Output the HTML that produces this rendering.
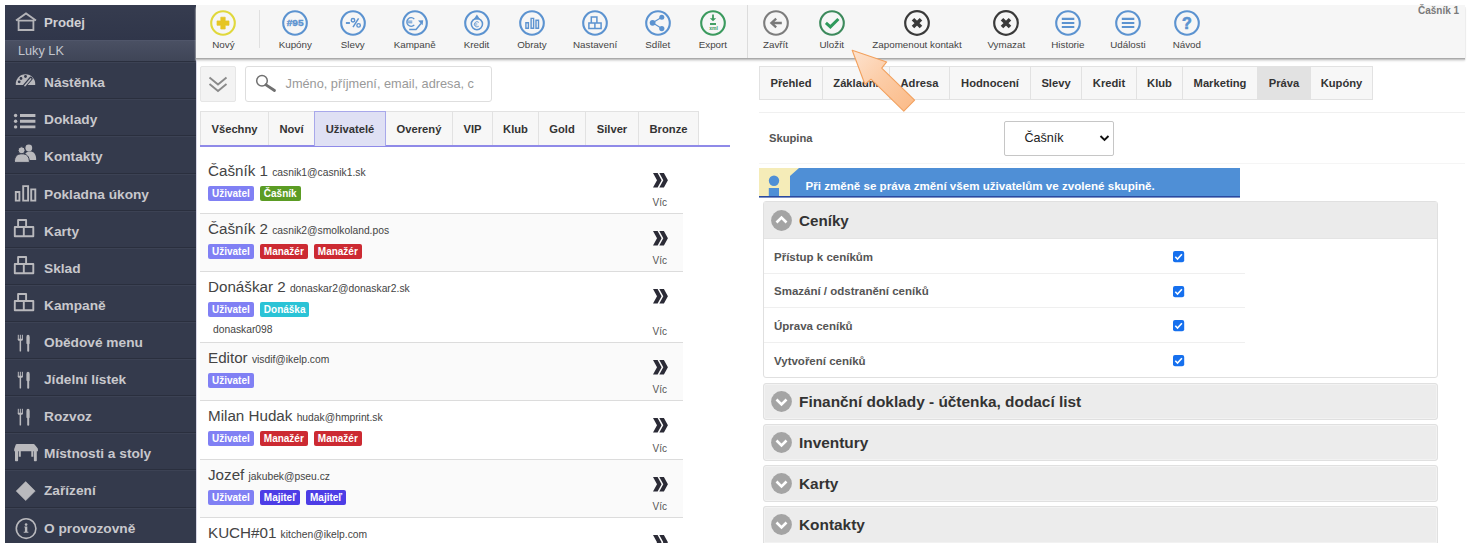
<!DOCTYPE html>
<html><head><meta charset="utf-8">
<style>
*{box-sizing:border-box;margin:0;padding:0}
html,body{width:1471px;height:553px;overflow:hidden;background:#fff;font-family:"Liberation Sans",sans-serif;position:relative}
.a{position:absolute}
.nw{white-space:nowrap}
/* sidebar */
#sb{left:5px;top:5px;width:191px;height:538px;background:#343a4c;overflow:hidden}
.sbh{left:0;top:0;width:191px;height:35px;background:linear-gradient(#363c4f,#30364a)}
.sbl{left:0;top:35px;width:191px;height:21px;background:linear-gradient(#4a5063,#3f4557);border-top:1px solid #50566a;color:#c3c6ce;font-size:12.7px}
.sr{left:0;width:191px;height:37px;border-top:1px solid #2a2f3e;box-shadow:inset 0 1px 0 #3c4254}
.st{left:39px;color:#c8c8cc;font-size:13.7px;font-weight:bold;white-space:nowrap}
.si{left:8px}
/* toolbar */
.tb{top:5px;height:53px;background:#f6f6f6;box-shadow:0 1px 0 #aaa,0 2px 1px #c8c8c8,0 3px 2px #e0e0e0}
.tl{font-size:9.8px;color:#444;white-space:nowrap;text-align:center;width:120px;top:35px}
.ic{top:9px;width:28px;height:28px}
/* list */
.tab{top:111px;height:35px;background:#f7f7f7;border:1px solid #e2e2e2;border-bottom:none;font-size:11.2px;font-weight:bold;color:#333;text-align:center;line-height:34px}
.li{left:200px;width:483px;border-bottom:1px solid #dcdcdc}
.nm{left:8px;font-size:15.2px;color:#444;white-space:nowrap}
.nm small{font-size:10.3px;color:#444}
.bd{height:15px;top:31px;color:#fff;font-size:10px;font-weight:bold;line-height:15px;padding:0 4px;border-radius:2px;white-space:nowrap}
.bu{background:#8080f4}
.bg{background:#5b9c24}
.br{background:#cc2a32}
.bc{background:#2bc3d6}
.bm{background:#4d3de6}
.more{left:455px;width:20px}
.vic{left:452.5px;font-size:10px;color:#555;white-space:nowrap}
/* right */
.rt{top:66px;height:34px;background:#f7f7f7;border:1px solid #e2e2e2;font-size:11.2px;font-weight:bold;color:#333;text-align:center;line-height:32px}
.acc{left:763px;width:675px;height:37px;background:#ececec;border:1px solid #e0e0e0;border-radius:3px;box-shadow:inset 0 0 0 1px #f2f2f2}
.acct{left:35px;top:8px;font-size:15.2px;font-weight:bold;color:#333;white-space:nowrap}
.row{left:764px;width:481px;height:35px;border-bottom:1px solid #ececec}
.rowt{left:10px;top:10px;font-size:11.2px;font-weight:bold;color:#555;white-space:nowrap}
.cb{left:409px;top:11px;width:12px;height:12px;background:#1f72e8;border-radius:2px}
</style></head><body>

<!-- SIDEBAR -->
<div id="sb" class="a">
  <div class="a sbh">
    <svg class="a" style="left:9px;top:6px" width="24" height="22" viewBox="0 0 24 22"><path d="M2 9.6 L12 2.4 L22 9.6 M3.5 9.6 H20.5 M4.6 9.6 V19 H19.4 V9.6" fill="none" stroke="#b4b4b8" stroke-width="1.8"/></svg>
    <div class="a nw" style="left:39px;top:10px;color:#d0d0d4;font-size:13.2px;font-weight:bold">Prodej</div>
  </div>
  <div class="a sbl"><div class="a nw" style="left:13px;top:3px">Luky LK</div></div>
  <div class="a sr" style="top:56px;height:37px"><svg class="a" style="left:0;top:-1px" width="40" height="38" viewBox="0 0 40 38"><g transform="translate(0,-0.9)"><path d="M10.81 24.9A9.75 9.75 0 1 1 30.19 24.9Z" fill="#b9b9bd"/><circle cx="14.2" cy="21.7" r="1.4" fill="#343a4c"/><circle cx="16" cy="18.4" r="1.4" fill="#343a4c"/><circle cx="20.5" cy="16.4" r="1.4" fill="#343a4c"/><path d="M19.7 25.6L25.9 18.4" stroke="#343a4c" stroke-width="3.6" stroke-linecap="round"/><path d="M19.9 25.6L25.7 18.8" stroke="#b9b9bd" stroke-width="1.5" stroke-linecap="round"/></g></svg><div class="a st" style="top:12.6px">Nástěnka</div></div>
  <div class="a sr" style="top:93px;height:37px"><svg class="a" style="left:0;top:-1px" width="40" height="38" viewBox="0 0 40 38"><circle cx="10.6" cy="17.5" r="1.7" fill="#b9b9bd"/><circle cx="10.6" cy="23.2" r="1.7" fill="#b9b9bd"/><circle cx="10.6" cy="28.9" r="1.7" fill="#b9b9bd"/><path d="M15 17.5h15.4M15 23.2h15.4M15 28.9h15.4" stroke="#b9b9bd" stroke-width="2.9"/></svg><div class="a st" style="top:12.6px">Doklady</div></div>
  <div class="a sr" style="top:130px;height:38px"><svg class="a" style="left:0;top:-1px" width="40" height="38" viewBox="0 0 40 38"><g transform="translate(0,-0.8)"><circle cx="23.8" cy="13.8" r="3.4" fill="#b9b9bd"/><path d="M18.8 25.7C18.8 20 21.3 17.4 25 17.4C28.8 17.4 31.2 20 31.2 25.7Z" fill="#b9b9bd"/><circle cx="16.6" cy="16.1" r="3.5" fill="#b9b9bd" stroke="#343a4c" stroke-width="1"/><path d="M9.4 28.2C9.4 22.2 12 19.6 16.9 19.6C21.8 19.6 24.4 22.2 24.4 28.2Z" fill="#b9b9bd" stroke="#343a4c" stroke-width="1"/></g></svg><div class="a st" style="top:12.6px">Kontakty</div></div>
  <div class="a sr" style="top:168px;height:37px"><svg class="a" style="left:0;top:-1px" width="40" height="38" viewBox="0 0 40 38"><path d="M10.8 19h3.6v8.6h-3.6z M18.2 13.1h4.9v14.5h-4.9z M26.2 16.4h4.1v11.2h-4.1z" fill="none" stroke="#b9b9bd" stroke-width="1.9"/></svg><div class="a st" style="top:12.6px">Pokladna úkony</div></div>
  <div class="a sr" style="top:205px;height:37px"><svg class="a" style="left:0;top:-1px" width="40" height="38" viewBox="0 0 40 38"><path d="M13.1 10h8v7h-8z M9.8 17h9v9.3h-9z M18.8 17h9.5v9.3h-9.5z" fill="none" stroke="#b9b9bd" stroke-width="1.9" stroke-linejoin="round"/></svg><div class="a st" style="top:12.6px">Karty</div></div>
  <div class="a sr" style="top:242px;height:37px"><svg class="a" style="left:0;top:-1px" width="40" height="38" viewBox="0 0 40 38"><path d="M13.1 10h8v7h-8z M9.8 17h9v9.3h-9z M18.8 17h9.5v9.3h-9.5z" fill="none" stroke="#b9b9bd" stroke-width="1.9" stroke-linejoin="round"/></svg><div class="a st" style="top:12.6px">Sklad</div></div>
  <div class="a sr" style="top:279px;height:37px"><svg class="a" style="left:0;top:-1px" width="40" height="38" viewBox="0 0 40 38"><path d="M13.1 10h8v7h-8z M9.8 17h9v9.3h-9z M18.8 17h9.5v9.3h-9.5z" fill="none" stroke="#b9b9bd" stroke-width="1.9" stroke-linejoin="round"/></svg><div class="a st" style="top:12.6px">Kampaně</div></div>
  <div class="a sr" style="top:316px;height:37px"><svg class="a" style="left:0;top:-1px" width="40" height="38" viewBox="0 0 40 38"><path d="M13.3 13.8v5 M15.35 13.8v5 M17.4 13.8v5" stroke="#b9b9bd" stroke-width="1"/><path d="M12.8 17.8h5.1v0.6c0 .8-.6 1.4-1.4 1.4h-2.3c-.8 0-1.4-.6-1.4-1.4z M14.6 19h1.5v11c0 .4-.3.6-.75.6s-.75-.2-.75-.6z" fill="#b9b9bd"/><path d="M21.4 16Q21.4 13.8 23 13.8Q24.7 13.8 24.7 16V22.5L24.2 23.3V30Q24.2 30.8 23.2 30.8Q22.2 30.8 22.2 30V23.3L21.4 22.5Z" fill="#b9b9bd"/></svg><div class="a st" style="top:12.6px">Obědové menu</div></div>
  <div class="a sr" style="top:353px;height:37px"><svg class="a" style="left:0;top:-1px" width="40" height="38" viewBox="0 0 40 38"><path d="M13.3 13.8v5 M15.35 13.8v5 M17.4 13.8v5" stroke="#b9b9bd" stroke-width="1"/><path d="M12.8 17.8h5.1v0.6c0 .8-.6 1.4-1.4 1.4h-2.3c-.8 0-1.4-.6-1.4-1.4z M14.6 19h1.5v11c0 .4-.3.6-.75.6s-.75-.2-.75-.6z" fill="#b9b9bd"/><path d="M21.4 16Q21.4 13.8 23 13.8Q24.7 13.8 24.7 16V22.5L24.2 23.3V30Q24.2 30.8 23.2 30.8Q22.2 30.8 22.2 30V23.3L21.4 22.5Z" fill="#b9b9bd"/></svg><div class="a st" style="top:12.6px">Jídelní lístek</div></div>
  <div class="a sr" style="top:390px;height:37px"><svg class="a" style="left:0;top:-1px" width="40" height="38" viewBox="0 0 40 38"><path d="M13.3 13.8v5 M15.35 13.8v5 M17.4 13.8v5" stroke="#b9b9bd" stroke-width="1"/><path d="M12.8 17.8h5.1v0.6c0 .8-.6 1.4-1.4 1.4h-2.3c-.8 0-1.4-.6-1.4-1.4z M14.6 19h1.5v11c0 .4-.3.6-.75.6s-.75-.2-.75-.6z" fill="#b9b9bd"/><path d="M21.4 16Q21.4 13.8 23 13.8Q24.7 13.8 24.7 16V22.5L24.2 23.3V30Q24.2 30.8 23.2 30.8Q22.2 30.8 22.2 30V23.3L21.4 22.5Z" fill="#b9b9bd"/></svg><div class="a st" style="top:12.6px">Rozvoz</div></div>
  <div class="a sr" style="top:427px;height:37px"><svg class="a" style="left:0;top:-1px" width="40" height="38" viewBox="0 0 40 38"><path d="M11.8 12.1H28.6Q29.2 12.1 29.6 12.6L32.6 16.3Q32.9 16.7 32.9 17.2V19.3H9.2V17.2Q9.2 16.7 9.5 16.3L10.8 12.6Q11.2 12.1 11.8 12.1Z" fill="#b9b9bd"/><path d="M10 19h3.1v9.6q0 .7-.7.7h-1.7q-.7 0-.7-.7z M28.9 19h2.9v9.6q0 .7-.7.7h-1.5q-.7 0-.7-.7z M13.8 19h2v5.8h-2z M26.3 19h2v5.8h-2z" fill="#b9b9bd"/></svg><div class="a st" style="top:12.6px">Místnosti a stoly</div></div>
  <div class="a sr" style="top:464px;height:38px"><svg class="a" style="left:0;top:-1px" width="40" height="38" viewBox="0 0 40 38"><path d="M20.7 12.6 L30.2 22.1 L20.7 31.6 L11.2 22.1z" fill="#b9b9bd" stroke="#b9b9bd" stroke-width="0.6" stroke-linejoin="round"/></svg><div class="a st" style="top:12.6px">Zařízení</div></div>
  <div class="a sr" style="top:502px;height:36px"><svg class="a" style="left:0;top:-1px" width="40" height="38" viewBox="0 0 40 38"><circle cx="21.1" cy="21.6" r="9.8" fill="none" stroke="#b9b9bd" stroke-width="1.6"/><circle cx="21.1" cy="17.6" r="1.3" fill="#b9b9bd"/><path d="M19.4 19.4h2.9v5.3h1.1v1.1h-4.7v-1.1h1.2v-4.2h-.5z" fill="#b9b9bd"/></svg><div class="a st" style="top:12.6px">O provozovně</div></div>
</div>

<!-- TOOLBAR -->
<div class="a tb" style="left:196px;width:1269px"></div>
<div class="a" style="left:747px;top:5px;width:1px;height:53px;background:#dcdcdc"></div>
<div class="a" style="left:259px;top:10px;width:1px;height:38px;background:#e0e0e0"></div>
<div class="a nw" style="left:1418px;top:5px;font-size:10px;font-weight:bold;color:#7a7a7a">Čašník 1</div>
<svg class="a" style="left:208.4px;top:7.7px" width="30" height="30" viewBox="0 0 30 30"><circle cx="15" cy="15" r="11.8" fill="none" stroke="#e0d83c" stroke-width="2.1"/><path d="M12.8 9.2h4.4v3.7H21v4.4h-3.8V21h-4.4v-3.7H9v-4.4h3.8z" fill="#e6c524" stroke="#e6c524" stroke-width="0.7" stroke-linejoin="round"/></svg>
<div class="a tl" style="left:163.4px;top:39px">Nový</div>
<svg class="a" style="left:280.3px;top:7.7px" width="30" height="30" viewBox="0 0 30 30"><circle cx="15" cy="15" r="11.8" fill="none" stroke="#5c93d0" stroke-width="2.1"/><text x="6.7" y="18" textLength="16.9" lengthAdjust="spacingAndGlyphs" font-family="Liberation Sans" font-weight="bold" font-size="8.2" fill="#5c93d0" stroke="#5c93d0" stroke-width="0.35">#95</text></svg>
<div class="a tl" style="left:235.3px;top:39px">Kupóny</div>
<svg class="a" style="left:337.8px;top:7.7px" width="30" height="30" viewBox="0 0 30 30"><circle cx="15" cy="15" r="11.8" fill="none" stroke="#5c93d0" stroke-width="2.1"/><path d="M7.9 15h4" stroke="#5c93d0" stroke-width="1.9"/><circle cx="15" cy="12.2" r="1.75" fill="none" stroke="#5c93d0" stroke-width="1.4"/><circle cx="20.6" cy="17.4" r="1.75" fill="none" stroke="#5c93d0" stroke-width="1.4"/><path d="M20.6 10.3L15 19.2" stroke="#5c93d0" stroke-width="1.5"/></svg>
<div class="a tl" style="left:292.8px;top:39px">Slevy</div>
<svg class="a" style="left:399.7px;top:7.7px" width="30" height="30" viewBox="0 0 30 30"><circle cx="15" cy="15" r="11.8" fill="none" stroke="#5c93d0" stroke-width="2.1"/><path d="M14.3 11.1A4.3 4.3 0 1 0 14.3 16.9" fill="none" stroke="#5c93d0" stroke-width="1.3"/><path d="M7.3 13.1h5M7.3 14.8h5" stroke="#5c93d0" stroke-width="1"/><path d="M9.2 21.6H16L21 15.5" fill="none" stroke="#5c93d0" stroke-width="1.5"/><path d="M18 12.6L23.2 12.2L22.6 17.3Z" fill="#5c93d0"/></svg>
<div class="a tl" style="left:354.7px;top:39px">Kampaně</div>
<svg class="a" style="left:461.5px;top:7.7px" width="30" height="30" viewBox="0 0 30 30"><circle cx="15" cy="15" r="11.8" fill="none" stroke="#5c93d0" stroke-width="2.1"/><circle cx="14.9" cy="16.1" r="5.6" fill="none" stroke="#5c93d0" stroke-width="1.5"/><path d="M14.9 6.6L11.6 11.6H18.2Z" fill="#5c93d0"/><path d="M16.8 14.4A2.6 2.6 0 1 0 16.8 18.2" fill="none" stroke="#5c93d0" stroke-width="0.9"/><path d="M12.5 15.8h2.8M12.5 17h2.8" stroke="#5c93d0" stroke-width="0.6"/></svg>
<div class="a tl" style="left:416.5px;top:39px">Kredit</div>
<svg class="a" style="left:516.9px;top:7.7px" width="30" height="30" viewBox="0 0 30 30"><circle cx="15" cy="15" r="11.8" fill="none" stroke="#5c93d0" stroke-width="2.1"/><path d="M8.9 14.8h2.5v5.4h-2.5z M14.1 10.4h2.5v9.8h-2.5z M19 12.3h2.5v7.9h-2.5z" fill="none" stroke="#5c93d0" stroke-width="1.4"/></svg>
<div class="a tl" style="left:471.9px;top:39px">Obraty</div>
<svg class="a" style="left:580.1px;top:7.7px" width="30" height="30" viewBox="0 0 30 30"><circle cx="15" cy="15" r="11.8" fill="none" stroke="#5c93d0" stroke-width="2.1"/><path d="M11.3 9.1h5.6v6h-5.6z M8.9 15.1h12.2v5.5H8.9z M14.9 15.1v5.5" fill="none" stroke="#5c93d0" stroke-width="1.5"/></svg>
<div class="a tl" style="left:535.1px;top:39px">Nastavení</div>
<svg class="a" style="left:642.7px;top:7.7px" width="30" height="30" viewBox="0 0 30 30"><circle cx="15" cy="15" r="11.8" fill="none" stroke="#5c93d0" stroke-width="2.1"/><path d="M18.8 9.3L9.6 14.8L18.8 20.6" fill="none" stroke="#5c93d0" stroke-width="1.2"/><circle cx="18.8" cy="9.3" r="2.5" fill="#5c93d0"/><circle cx="9.6" cy="14.8" r="2.9" fill="#5c93d0"/><circle cx="18.8" cy="20.6" r="2.6" fill="#5c93d0"/></svg>
<div class="a tl" style="left:597.7px;top:39px">Sdílet</div>
<svg class="a" style="left:697.9px;top:7.7px" width="30" height="30" viewBox="0 0 30 30"><circle cx="15" cy="15" r="11.8" fill="none" stroke="#3b9a5e" stroke-width="2.1"/><path d="M15 6.6v4.5" stroke="#3b9a5e" stroke-width="1.8"/><path d="M11.8 10.2H18.2L15 13.3Z" fill="#3b9a5e"/><path d="M12 16h6" stroke="#3b9a5e" stroke-width="1.9"/><text x="11.2" y="22" textLength="8.6" lengthAdjust="spacingAndGlyphs" font-family="Liberation Sans" font-weight="bold" font-size="5" fill="#3b9a5e">xml</text></svg>
<div class="a tl" style="left:652.9px;top:39px">Export</div>
<svg class="a" style="left:760.5px;top:7.7px" width="30" height="30" viewBox="0 0 30 30"><circle cx="15" cy="15" r="11.8" fill="none" stroke="#7d7d7d" stroke-width="2.1"/><path d="M20.8 15H10.4 M15.2 10.6L10.4 15L15.2 19.4" fill="none" stroke="#7a7a7a" stroke-width="2.3"/></svg>
<div class="a tl" style="left:715.5px;top:39px">Zavřít</div>
<svg class="a" style="left:816.8px;top:7.7px" width="30" height="30" viewBox="0 0 30 30"><circle cx="15" cy="15" r="11.8" fill="none" stroke="#3d8a5c" stroke-width="2.1"/><path d="M8.9 14.9L13.4 18.9L21.4 11" fill="none" stroke="#2f9a5c" stroke-width="3"/></svg>
<div class="a tl" style="left:771.8px;top:39px">Uložit</div>
<svg class="a" style="left:902.0px;top:7.7px" width="30" height="30" viewBox="0 0 30 30"><circle cx="15" cy="15" r="11.8" fill="none" stroke="#3a3a3a" stroke-width="2.2"/><path d="M11 11.2L19 19M19 11.2L11 19" stroke="#3a3a3a" stroke-width="3.6"/></svg>
<div class="a tl" style="left:857.0px;top:39px">Zapomenout kontakt</div>
<svg class="a" style="left:991.3px;top:7.7px" width="30" height="30" viewBox="0 0 30 30"><circle cx="15" cy="15" r="11.8" fill="none" stroke="#3a3a3a" stroke-width="2.2"/><path d="M11 11.2L19 19M19 11.2L11 19" stroke="#3a3a3a" stroke-width="3.6"/></svg>
<div class="a tl" style="left:946.3px;top:39px">Vymazat</div>
<svg class="a" style="left:1052.9px;top:7.7px" width="30" height="30" viewBox="0 0 30 30"><circle cx="15" cy="15" r="11.8" fill="none" stroke="#5c93d0" stroke-width="2.1"/><path d="M8.8 10.9h12.5M8.8 15h12.5M8.8 19h12.5" stroke="#5c93d0" stroke-width="2.2"/></svg>
<div class="a tl" style="left:1007.9px;top:39px">Historie</div>
<svg class="a" style="left:1112.9px;top:7.7px" width="30" height="30" viewBox="0 0 30 30"><circle cx="15" cy="15" r="11.8" fill="none" stroke="#5c93d0" stroke-width="2.1"/><path d="M8.8 10.9h12.5M8.8 15h12.5M8.8 19h12.5" stroke="#5c93d0" stroke-width="2.2"/></svg>
<div class="a tl" style="left:1067.9px;top:39px">Události</div>
<svg class="a" style="left:1171.8px;top:7.7px" width="30" height="30" viewBox="0 0 30 30"><circle cx="15" cy="15" r="11.8" fill="none" stroke="#5c93d0" stroke-width="2.1"/><text x="14.9" y="20.9" text-anchor="middle" font-family="Liberation Sans" font-weight="bold" font-size="16" fill="#5c93d0" stroke="#5c93d0" stroke-width="0.7">?</text></svg>
<div class="a tl" style="left:1126.8px;top:39px">Návod</div>

<!-- LIST PANEL -->
<div class="a" style="left:196px;top:60px;width:1px;height:483px;background:#d6d6e4"></div>
<div class="a" style="left:200px;top:66px;width:36px;height:36px;background:#f3f3f3;border:1px solid #e6e6e6;border-radius:2px"></div>
<svg class="a" style="left:200px;top:66px" width="36" height="36" viewBox="0 0 36 36"><path d="M9.5 11.5 L18 18.5 L26.5 11.5 M9.5 18 L18 25 L26.5 18" fill="none" stroke="#8a8a8a" stroke-width="1.9"/></svg>
<div class="a" style="left:245px;top:66px;width:247px;height:36px;background:#fff;border:1px solid #dedede;border-radius:3px"></div>
<svg class="a" style="left:245px;top:66px" width="40" height="36" viewBox="0 0 40 36"><circle cx="17" cy="14.8" r="5.3" fill="none" stroke="#707070" stroke-width="1.5"/><path d="M21 18.8 L29.5 24.5" stroke="#707070" stroke-width="2.8" stroke-linecap="round"/></svg>
<div class="a nw" style="left:285.5px;top:76px;font-size:12.76px;color:#999">Jméno, příjmení, email, adresa, c</div>
<div class="a tab" style="left:200px;width:69px;">Všechny</div>
<div class="a tab" style="left:268px;width:47px;">Noví</div>
<div class="a tab" style="left:314px;width:72px;background:#dfe0f4;border-color:#a8a8ea;z-index:2">Uživatelé</div>
<div class="a tab" style="left:385px;width:68px;">Overený</div>
<div class="a tab" style="left:452px;width:41px;">VIP</div>
<div class="a tab" style="left:492px;width:47px;">Klub</div>
<div class="a tab" style="left:538px;width:48px;">Gold</div>
<div class="a tab" style="left:585px;width:54px;">Silver</div>
<div class="a tab" style="left:638px;width:61px;">Bronze</div>
<div class="a" style="left:200px;top:145px;width:530px;height:2px;background:#8f8ae8"></div>
<div class="a li" style="top:156px;height:58px;background:#fff;"><div class="a nm" style="top:6px">Čašník 1 <small>casnik1@casnik1.sk</small></div><div class="a nw" style="left:8px;top:30px;display:flex;gap:6px"><span class="bd bu" style="position:static;display:inline-block">Uživatel</span><span class="bd bg" style="position:static;display:inline-block">Čašník</span></div><svg class="a" style="left:452px;top:16px" width="18" height="17" viewBox="0 0 18 17"><path d="M1 1H5.6L9.6 8.3L5.6 15.6H1L5 8.3Z M7.3 1H11.9L15.9 8.3L11.9 15.6H7.3L11.3 8.3Z" fill="#2b2b36"/></svg><div class="a vic" style="top:41px">Víc</div></div>
<div class="a li" style="top:214px;height:58px;background:#fafafa;"><div class="a nm" style="top:6px">Čašník 2 <small>casnik2@smolkoland.pos</small></div><div class="a nw" style="left:8px;top:30px;display:flex;gap:6px"><span class="bd bu" style="position:static;display:inline-block">Uživatel</span><span class="bd br" style="position:static;display:inline-block">Manažér</span><span class="bd br" style="position:static;display:inline-block">Manažér</span></div><svg class="a" style="left:452px;top:16px" width="18" height="17" viewBox="0 0 18 17"><path d="M1 1H5.6L9.6 8.3L5.6 15.6H1L5 8.3Z M7.3 1H11.9L15.9 8.3L11.9 15.6H7.3L11.3 8.3Z" fill="#2b2b36"/></svg><div class="a vic" style="top:41px">Víc</div></div>
<div class="a li" style="top:272px;height:71px;background:#fff;"><div class="a nm" style="top:6px">Donáškar 2 <small>donaskar2@donaskar2.sk</small></div><div class="a nw" style="left:8px;top:30px;display:flex;gap:6px"><span class="bd bu" style="position:static;display:inline-block">Uživatel</span><span class="bd bc" style="position:static;display:inline-block">Donáška</span></div><div class="a nw" style="left:13px;top:52px;font-size:10.3px;color:#444">donaskar098</div><svg class="a" style="left:452px;top:16px" width="18" height="17" viewBox="0 0 18 17"><path d="M1 1H5.6L9.6 8.3L5.6 15.6H1L5 8.3Z M7.3 1H11.9L15.9 8.3L11.9 15.6H7.3L11.3 8.3Z" fill="#2b2b36"/></svg><div class="a vic" style="top:54px">Víc</div></div>
<div class="a li" style="top:343px;height:58px;background:#fafafa;"><div class="a nm" style="top:6px">Editor <small>visdif@ikelp.com</small></div><div class="a nw" style="left:8px;top:30px;display:flex;gap:6px"><span class="bd bu" style="position:static;display:inline-block">Uživatel</span></div><svg class="a" style="left:452px;top:16px" width="18" height="17" viewBox="0 0 18 17"><path d="M1 1H5.6L9.6 8.3L5.6 15.6H1L5 8.3Z M7.3 1H11.9L15.9 8.3L11.9 15.6H7.3L11.3 8.3Z" fill="#2b2b36"/></svg><div class="a vic" style="top:41px">Víc</div></div>
<div class="a li" style="top:401px;height:59px;background:#fff;"><div class="a nm" style="top:6px">Milan Hudak <small>hudak@hmprint.sk</small></div><div class="a nw" style="left:8px;top:30px;display:flex;gap:6px"><span class="bd bu" style="position:static;display:inline-block">Uživatel</span><span class="bd br" style="position:static;display:inline-block">Manažér</span><span class="bd br" style="position:static;display:inline-block">Manažér</span></div><svg class="a" style="left:452px;top:16px" width="18" height="17" viewBox="0 0 18 17"><path d="M1 1H5.6L9.6 8.3L5.6 15.6H1L5 8.3Z M7.3 1H11.9L15.9 8.3L11.9 15.6H7.3L11.3 8.3Z" fill="#2b2b36"/></svg><div class="a vic" style="top:42px">Víc</div></div>
<div class="a li" style="top:460px;height:58px;background:#fafafa;"><div class="a nm" style="top:6px">Jozef <small>jakubek@pseu.cz</small></div><div class="a nw" style="left:8px;top:30px;display:flex;gap:6px"><span class="bd bu" style="position:static;display:inline-block">Uživatel</span><span class="bd bm" style="position:static;display:inline-block">Majiteľ</span><span class="bd bm" style="position:static;display:inline-block">Majiteľ</span></div><svg class="a" style="left:452px;top:16px" width="18" height="17" viewBox="0 0 18 17"><path d="M1 1H5.6L9.6 8.3L5.6 15.6H1L5 8.3Z M7.3 1H11.9L15.9 8.3L11.9 15.6H7.3L11.3 8.3Z" fill="#2b2b36"/></svg><div class="a vic" style="top:41px">Víc</div></div>
<div class="a li" style="top:518px;height:25px;background:#fff;border-bottom:none;overflow:hidden"><div class="a nm" style="top:6px">KUCH#01 <small>kitchen@ikelp.com</small></div><svg class="a" style="left:452px;top:16px" width="18" height="17" viewBox="0 0 18 17"><path d="M1 1H5.6L9.6 8.3L5.6 15.6H1L5 8.3Z M7.3 1H11.9L15.9 8.3L11.9 15.6H7.3L11.3 8.3Z" fill="#2b2b36"/></svg></div>
<!-- RIGHT PANEL -->
<div class="a" style="left:759px;top:163px;width:706px;height:1px;background:#f5f5f5"></div>
<div class="a rt" style="left:759px;width:64px;">Přehled</div>
<div class="a rt" style="left:822px;width:68px;">Základní</div>
<div class="a rt" style="left:889px;width:61px;">Adresa</div>
<div class="a rt" style="left:949px;width:82px;">Hodnocení</div>
<div class="a rt" style="left:1030px;width:52px;">Slevy</div>
<div class="a rt" style="left:1081px;width:56px;">Kredit</div>
<div class="a rt" style="left:1136px;width:47px;">Klub</div>
<div class="a rt" style="left:1182px;width:76px;">Marketing</div>
<div class="a rt" style="left:1257px;width:54px;background:#e2e2e2;">Práva</div>
<div class="a rt" style="left:1310px;width:63px;">Kupóny</div>
<div class="a" style="left:759px;top:112px;width:706px;height:1px;background:#f0f0f0"></div>
<div class="a nw" style="left:769px;top:132px;font-size:11.2px;font-weight:bold;color:#555">Skupina</div>
<div class="a" style="left:1004px;top:121px;width:110px;height:35px;border:1px solid #c6c6c6;border-radius:2px;background:#fff"></div>
<div class="a nw" style="left:1024.4px;top:131px;font-size:12.6px;color:#222">Čašník</div>
<svg class="a" style="left:1098px;top:133px" width="13" height="10" viewBox="0 0 13 10"><path d="M2.5 3 L6.5 7 L10.5 3" fill="none" stroke="#111" stroke-width="1.9"/></svg>
<div class="a" style="left:759px;top:168px;width:481px;height:28px;background:#f5ecb8"></div>
<svg class="a" style="left:759px;top:168px" width="481" height="30" viewBox="0 0 481 30"><path d="M40 0 H481 V28 H31 V8 Z" fill="#4f8fd6"/><rect x="0" y="28" width="481" height="1.6" fill="#2a4aa0"/><circle cx="15" cy="12.7" r="5.2" fill="#4f8fd6"/><rect x="9.8" y="20" width="10.2" height="8" fill="#4f8fd6"/></svg>
<div class="a nw" style="left:805.5px;top:179px;font-size:11.6px;font-weight:bold;color:#fff">Při změně se práva změní všem uživatelům ve zvolené skupině.</div>
<div class="a" style="left:763px;top:201px;width:675px;height:177px;border:1px solid #e0e0e0;border-radius:3px;background:#fff"></div>
<div class="a" style="left:764px;top:202px;width:673px;height:37px;background:#ebebeb;border-bottom:1px solid #e4e4e4"></div>
<svg class="a" style="left:771px;top:209.7px" width="21" height="21" viewBox="0 0 21 21"><circle cx="10.5" cy="10.5" r="10.4" fill="#a4a4a4"/><path d="M5.5 12.5 L10.5 7.5 L15.5 12.5" fill="none" stroke="#fff" stroke-width="2.6"/></svg>
<div class="a nw" style="left:799px;top:212px;font-size:15.2px;font-weight:bold;color:#333">Ceníky</div>
<div class="a" style="left:764px;top:239px;width:481px;height:34.5px;border-bottom:1px solid #efefef;"></div>
<div class="a nw" style="left:774px;top:250.5px;font-size:11.5px;font-weight:bold;color:#555">Přístup k ceníkům</div>
<svg class="a" style="left:1172px;top:250px" width="13" height="13" viewBox="0 0 13 13"><rect x="1" y="1" width="11.2" height="11.2" rx="2" fill="#1670ee"/><path d="M3.3 6.8 L5.5 9 L9.9 4.3" fill="none" stroke="#fff" stroke-width="1.6"/></svg>
<div class="a" style="left:764px;top:273.5px;width:481px;height:34.5px;border-bottom:1px solid #efefef;"></div>
<div class="a nw" style="left:774px;top:285.0px;font-size:11.5px;font-weight:bold;color:#555">Smazání / odstranění ceníků</div>
<svg class="a" style="left:1172px;top:284.5px" width="13" height="13" viewBox="0 0 13 13"><rect x="1" y="1" width="11.2" height="11.2" rx="2" fill="#1670ee"/><path d="M3.3 6.8 L5.5 9 L9.9 4.3" fill="none" stroke="#fff" stroke-width="1.6"/></svg>
<div class="a" style="left:764px;top:308px;width:481px;height:35px;border-bottom:1px solid #efefef;"></div>
<div class="a nw" style="left:774px;top:319.5px;font-size:11.5px;font-weight:bold;color:#555">Úprava ceníků</div>
<svg class="a" style="left:1172px;top:319px" width="13" height="13" viewBox="0 0 13 13"><rect x="1" y="1" width="11.2" height="11.2" rx="2" fill="#1670ee"/><path d="M3.3 6.8 L5.5 9 L9.9 4.3" fill="none" stroke="#fff" stroke-width="1.6"/></svg>
<div class="a" style="left:764px;top:343px;width:481px;height:34.5px;border-bottom:none;"></div>
<div class="a nw" style="left:774px;top:354.5px;font-size:11.5px;font-weight:bold;color:#555">Vytvoření ceníků</div>
<svg class="a" style="left:1172px;top:354px" width="13" height="13" viewBox="0 0 13 13"><rect x="1" y="1" width="11.2" height="11.2" rx="2" fill="#1670ee"/><path d="M3.3 6.8 L5.5 9 L9.9 4.3" fill="none" stroke="#fff" stroke-width="1.6"/></svg>
<div class="a acc" style="top:383px"></div>
<svg class="a" style="left:771px;top:391px" width="21" height="21" viewBox="0 0 21 21"><circle cx="10.5" cy="10.5" r="10.4" fill="#a4a4a4"/><path d="M5.5 8.5 L10.5 13.5 L15.5 8.5" fill="none" stroke="#fff" stroke-width="2.6"/></svg>
<div class="a nw" style="left:799px;top:392.5px;font-size:15.4px;font-weight:bold;color:#333">Finanční doklady - účtenka, dodací list</div>
<div class="a acc" style="top:424px"></div>
<svg class="a" style="left:771px;top:432px" width="21" height="21" viewBox="0 0 21 21"><circle cx="10.5" cy="10.5" r="10.4" fill="#a4a4a4"/><path d="M5.5 8.5 L10.5 13.5 L15.5 8.5" fill="none" stroke="#fff" stroke-width="2.6"/></svg>
<div class="a nw" style="left:799px;top:433.5px;font-size:15.4px;font-weight:bold;color:#333">Inventury</div>
<div class="a acc" style="top:465px"></div>
<svg class="a" style="left:771px;top:473px" width="21" height="21" viewBox="0 0 21 21"><circle cx="10.5" cy="10.5" r="10.4" fill="#a4a4a4"/><path d="M5.5 8.5 L10.5 13.5 L15.5 8.5" fill="none" stroke="#fff" stroke-width="2.6"/></svg>
<div class="a nw" style="left:799px;top:474.5px;font-size:15.4px;font-weight:bold;color:#333">Karty</div>
<div class="a acc" style="top:506px;height:37px;border-radius:3px 3px 0 0;border-bottom:none"></div>
<svg class="a" style="left:771px;top:514px" width="21" height="21" viewBox="0 0 21 21"><circle cx="10.5" cy="10.5" r="10.4" fill="#a4a4a4"/><path d="M5.5 8.5 L10.5 13.5 L15.5 8.5" fill="none" stroke="#fff" stroke-width="2.6"/></svg>
<div class="a nw" style="left:799px;top:515.5px;font-size:15.4px;font-weight:bold;color:#333">Kontakty</div>
<!-- ARROW -->
<svg class="a" style="left:0;top:0;pointer-events:none" width="1471" height="553" viewBox="0 0 1471 553">
<defs><linearGradient id="ag" gradientUnits="userSpaceOnUse" x1="852" y1="50" x2="909" y2="105"><stop offset="0" stop-color="#fde3cf"/><stop offset="0.5" stop-color="#fccda8"/><stop offset="1" stop-color="#fbbd8c"/></linearGradient></defs>
<path d="M852.2 50.2 L886.7 61.9 L881.7 68.2 L914.6 100.1 L903.8 111.1 L871 79.2 L864.9 84.3 Z" fill="url(#ag)" stroke="#f2a15e" stroke-width="1.1" stroke-linejoin="round"/>
</svg>
</body></html>
